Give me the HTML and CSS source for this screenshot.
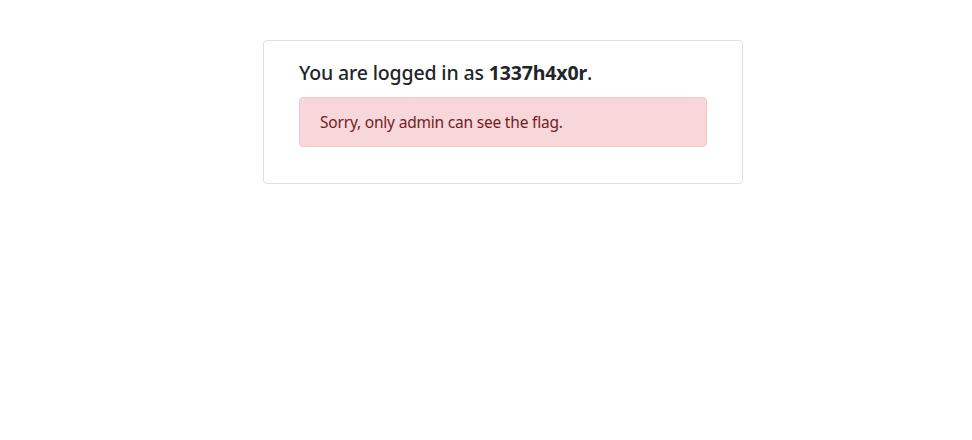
FILE: index.html
```html
<!DOCTYPE html>
<html>
<head>
<meta charset="utf-8">
<link rel="stylesheet" href="styles.css">
</head>
<body>
<div class="page">
  <div class="card">
    <h5 class="title">You are logged in as <strong>1337h4x0r</strong>.</h5>
    <div class="alert">Sorry, only admin can see the flag.</div>
  </div>
</div>
</body>
</html>
```
FILE: styles.css
```css
html, body { margin: 0; padding: 0; background: #fff; }
body { font-family: "Noto Sans", "Open Sans", sans-serif; color: #212529; }
.page { padding: 40px 0 0 263px; }
.card {
  width: 480px;
  box-sizing: border-box;
  border: 1px solid #dfdfdf;
  border-radius: 4px;
  padding: 20px 35px 20px 35px;
}
.title {
  margin: 0 0 12px 0;
  font-size: 19.5px;
  line-height: 24px;
  font-weight: 500;
  letter-spacing: -0.15px;
}
.title strong { font-weight: 700; }
.alert {
  background: #f8d7da;
  border: 1px solid #f5c6cb;
  color: #721c24;
  border-radius: 4px;
  padding: 12px 20px;
  font-size: 15.5px;
  letter-spacing: -0.2px;
  line-height: 24px;
  margin-bottom: 16px;
}
```
